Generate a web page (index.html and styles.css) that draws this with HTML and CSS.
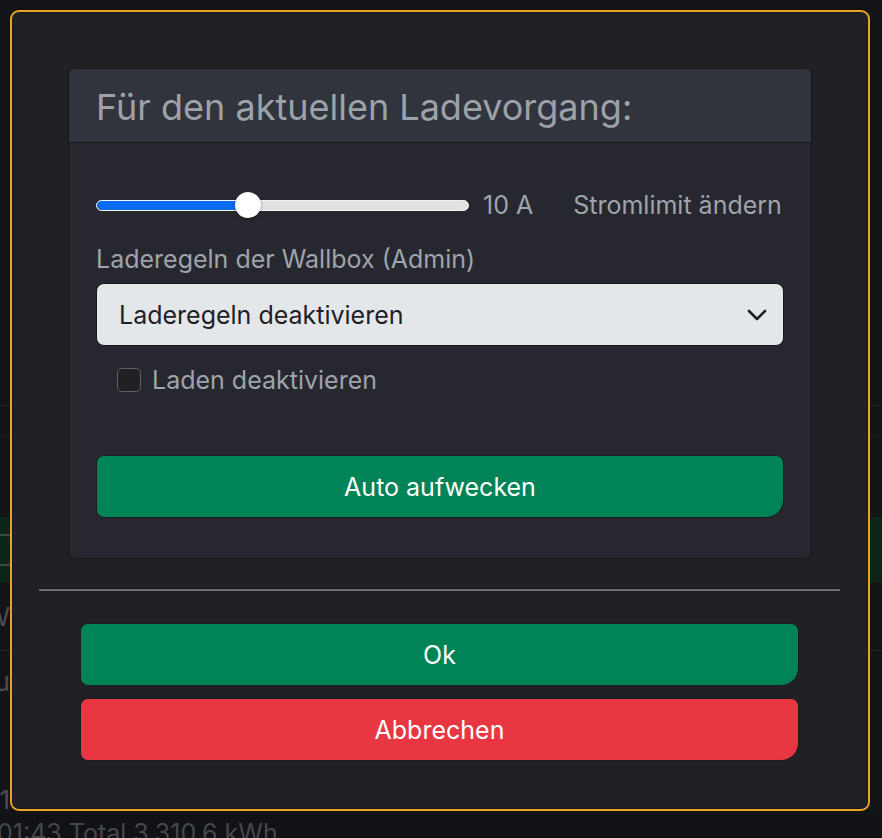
FILE: index.html
```html
<!DOCTYPE html>
<html lang="de">
<head>
    <meta charset="UTF-8">
    <title>Ladevorgang</title>
    <link rel="stylesheet" href="styles.css">
</head>
<body>
<div class="page">
    <div class="page-top"></div>
    <div class="page-row r1"></div>
    <div class="page-row r2"></div>
    <div class="page-row r3 green"><span class="edge-icon"></span></div>
    <div class="page-row r4"><span class="edge">kW</span></div>
    <div class="page-row r5"><span class="edge">Ku</span></div>
    <div class="page-row r6"><span class="edge">1</span></div>
    <div class="page-total">01:43 Total 3.310,6 kWh</div>
</div>

<div class="modal">
    <div class="modal-body">
        <div class="card">
            <div class="card-header">Für den aktuellen Ladevorgang:</div>
            <div class="card-body">
                <div class="slider-row">
                    <div class="slider">
                        <div class="slider-fill" style="width: 151px;"></div>
                        <div class="slider-thumb" style="left: 138px;"></div>
                    </div>
                    <span class="slider-value">10 A</span>
                    <span class="slider-label">Stromlimit ändern</span>
                </div>
                <div class="form-label">Laderegeln der Wallbox (Admin)</div>
                <div class="select">
                    <span>Laderegeln deaktivieren</span>
                    <svg width="20" height="12" viewBox="0 0 20 12">
                        <path d="M2 2 L10 10 L18 2" fill="none" stroke="#1e2126" stroke-width="2.6" stroke-linecap="round" stroke-linejoin="round"/>
                    </svg>
                </div>
                <div class="check-row">
                    <span class="checkbox"></span>
                    <span>Laden deaktivieren</span>
                </div>
                <div class="btn btn-success btn-wake">Auto aufwecken</div>
            </div>
        </div>
    </div>
    <hr class="divider">
    <div class="modal-footer">
        <div class="btn btn-success">Ok</div>
        <div class="btn btn-danger">Abbrechen</div>
    </div>
</div>
</body>
</html>
```

FILE: styles.css
```css
html, body {
    margin: 0;
    padding: 0;
}
body {
    background: #111215;
    font-family: Inter, "Noto Sans", sans-serif;
    width: 882px;
    height: 838px;
    overflow: hidden;
    position: relative;
}

/* page behind the dialog */
.page {
    display: flex;
    flex-direction: column;
    color: #4b4d52;
    font-size: 26px;
}
.page-top {
    height: 405px;
    background: #131417;
}
.page-row {
    border-top: 1px solid #1f2024;
    display: flex;
    align-items: center;
    background: #131417;
}
.r1 { height: 29px; }
.r2 { height: 81px; }
.r3 { height: 65px; border-top: none; }
.r4 { height: 67px; }
.r5 { height: 60px; border-top: 1px solid #26272b; }
.r6 { height: 104px; border-top: none; align-items: flex-end; }
.green {
    background: #0b2619;
}
.edge {
    width: 10px;
    overflow: hidden;
    display: flex;
    justify-content: flex-end;
    white-space: nowrap;
}
.edge-icon {
    display: block;
    width: 16px;
    height: 28px;
    margin-left: -8px;
    border: 2px solid #3c4a43;
    border-radius: 4px;
}
.page-total {
    white-space: nowrap;
    margin-top: -2px;
    text-indent: -3px;
    font-size: 25px;
    line-height: 40px;
    color: #45474b;
}

/* dialog */
.modal {
    position: absolute;
    top: 10px;
    left: 10px;
    width: 856px;
    height: 797px;
    background: #1f2124;
    border: 2px solid #eba520;
    border-radius: 9px;
    box-shadow: inset 0 0 0 1px #16172a;
    display: flex;
    flex-direction: column;
}
.modal-body {
    padding: 56px 56px 0 56px;
}
.card {
    border: 1px solid #16171b;
    border-radius: 6px;
    overflow: hidden;
}
.card-header {
    height: 74px;
    background: #31343c;
    border-bottom: 1px solid #16171b;
    color: #9ca2aa;
    font-size: 36px;
    display: flex;
    align-items: center;
    padding-left: 27px;
    box-sizing: border-box;
    padding-top: 2px;
}
.card-body {
    background: #27272f;
    padding: 48px 27px 40px 27px;
    color: #9ea4ab;
    font-size: 25px;
    line-height: 30px;
}
.slider-row {
    display: flex;
    align-items: center;
    height: 28px;
}
.slider {
    position: relative;
    width: 373px;
    height: 11px;
    box-sizing: border-box;
    background: #e2e2e2;
    border: 1px solid #f4f4f4;
    border-radius: 6px;
}
.slider-fill {
    height: 100%;
    background: #0a6af0;
    border-radius: 5px 0 0 5px;
}
.slider-thumb {
    position: absolute;
    top: -9px;
    width: 26px;
    height: 26px;
    border-radius: 50%;
    background: #ffffff;
    box-shadow: 0 1px 3px rgba(0, 0, 0, 0.4);
}
.slider-value {
    margin-left: 14px;
}
.slider-label {
    margin-left: 40px;
}
.form-label {
    margin-top: 25px;
}
.select {
    margin-top: 9px;
    height: 63px;
    box-sizing: border-box;
    background: #e4e7ea;
    border: 1px solid #15161a;
    border-radius: 8px;
    color: #1e2126;
    display: flex;
    align-items: center;
    justify-content: space-between;
    padding: 0 16px 0 22px;
}
.check-row {
    display: flex;
    align-items: center;
    margin-top: 19px;
    margin-left: 21px;
    gap: 11px;
}
.checkbox {
    display: block;
    width: 24px;
    height: 24px;
    box-sizing: border-box;
    border: 1.5px solid #5d6168;
    border-radius: 5px;
    background: #1f2125;
}
.btn {
    height: 63px;
    box-sizing: border-box;
    display: flex;
    align-items: center;
    justify-content: center;
    color: #ffffff;
    font-size: 25px;
    border: 1px solid #1b1b22;
    border-radius: 8px 8px 18px 8px;
}
.btn-success {
    background: #008457;
}
.btn-danger {
    background: #e83743;
}
.btn-wake {
    margin-top: 60px;
}
.divider {
    margin: 30px 28px 0 27px;
    border: none;
    height: 2px;
    background: #6a6e73;
    box-shadow: 0 -1px 0 #15161a;
}
.modal-footer {
    padding: 32px 69px 0 68px;
    display: flex;
    flex-direction: column;
    gap: 12px;
}
```
